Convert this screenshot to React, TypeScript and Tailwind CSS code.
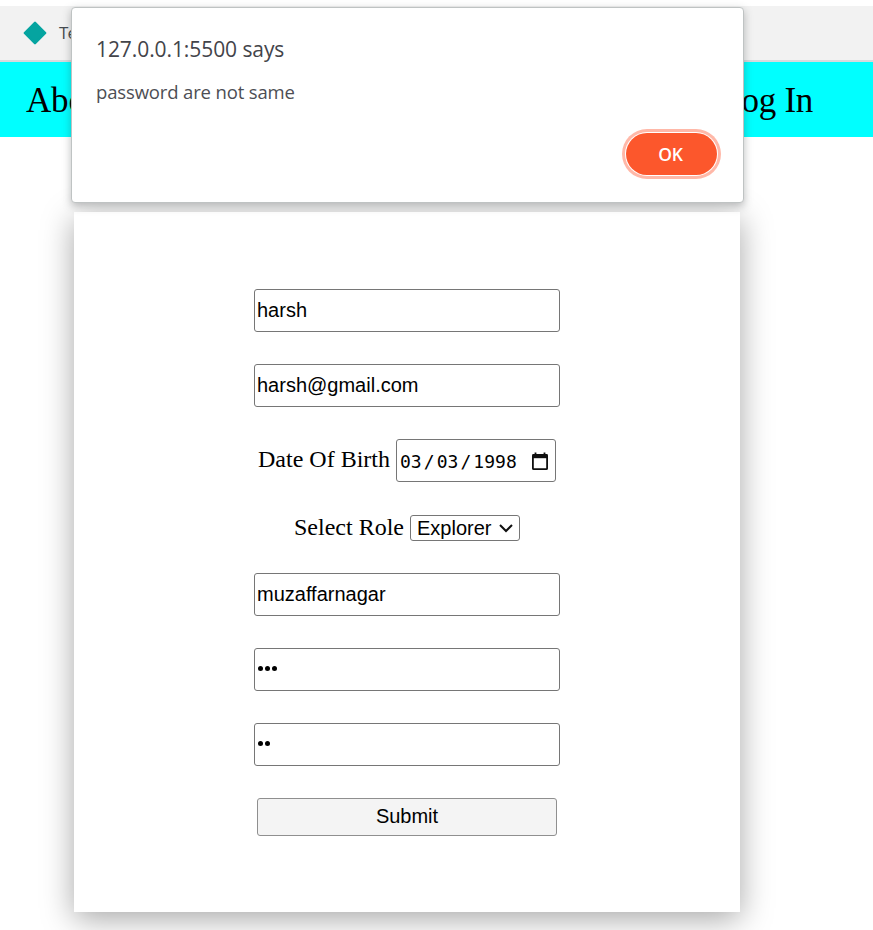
import type { ReactNode } from "react";

const sans = "font-['Liberation_Sans',Arial,sans-serif]";
const serif = "font-['Liberation_Serif','Times_New_Roman',serif]";
const ui = "font-['Open_Sans','Noto_Sans',sans-serif]";

function Field({ children }: { children: ReactNode }) {
  return (
    <div
      className={`${sans} flex h-[43px] w-[306px] items-center rounded-[3px] border border-[#767676] bg-white pl-[2px] pb-px text-[20px] leading-[23px] text-black`}
    >
      {children}
    </div>
  );
}

function Dots({ count }: { count: number }) {
  return (
    <div className="flex gap-[2px] pl-px pb-[2px]">
      {Array.from({ length: count }, (_, i) => (
        <span key={i} className="h-[5px] w-[5px] rounded-full bg-black" />
      ))}
    </div>
  );
}

function BookmarkBar() {
  return (
    <div className="mt-[6px] flex h-[56px] items-center border-b-2 border-[#d6d9dc] bg-[#f2f2f2] pl-[23px]">
      <svg width="24" height="24" viewBox="0 0 24 24">
        <path d="M12 1.8 22.2 12 12 22.2 1.8 12Z" fill="#05a4a0" stroke="#05a4a0" strokeWidth="2.4" strokeLinejoin="round" />
      </svg>
      <span className={`${ui} ml-[12px] text-[17px] leading-6 tracking-[-0.9px] text-[#454b50]`}>Te</span>
    </div>
  );
}

function NavBar() {
  return (
    <nav className={`${serif} flex h-[75px] items-center justify-between bg-[#00ffff] pl-[26px] pr-[60px] pt-[2px] text-[35px] leading-[42px] text-black`}>
      <span className="tracking-[-0.2px]">Abo</span>
      <span className="tracking-[-0.3px]">Log In</span>
    </nav>
  );
}

function SignupForm() {
  return (
    <main className="ml-[74px] mt-[75px] flex h-[700px] w-[666px] flex-col items-center bg-white pt-[77px] shadow-[0_7px_30px_rgba(0,0,0,0.35)]">
      <Field>harsh</Field>
      <div className="h-8" />
      <Field>harsh@gmail.com</Field>
      <div className={`${serif} mt-8 flex h-[43px] items-center text-[24px] leading-7 text-black`}>
        <span className="pb-[3px]">Date Of Birth</span>
        <div className="ml-[6px] flex h-[43px] w-[160px] items-center justify-between rounded-[3px] border border-[#767676] pl-[3px] pr-[6px] pt-px font-['DejaVu_Sans_Mono',monospace] text-[18px] tracking-[0.05px]">
          <span className="whitespace-nowrap pt-px">
            03<span className="px-[2px]">/</span>03<span className="px-[2px]">/</span>1998
          </span>
          <svg width="18" height="19" viewBox="0 0 18 19" className="shrink-0">
            <path d="M4.5 0.5v4M13.5 0.5v4" stroke="#101010" strokeWidth="1.8" />
            <rect x="1.9" y="3" width="14.2" height="14.2" rx="0.8" fill="none" stroke="#101010" strokeWidth="1.8" />
            <path d="M1.5 2.2h15v4h-15z" fill="#101010" />
          </svg>
        </div>
      </div>
      <div className={`${serif} mt-[33px] flex h-[26px] items-center text-[24px] leading-[26px] text-black`}>
        <span className="pb-[2px]">Select Role</span>
        <div className={`${sans} ml-[6px] flex h-[26px] w-[110px] items-center rounded-[3px] border border-[#767676] pl-[6px] text-[20px] leading-6`}>
          <span>Explorer</span>
          <svg width="16" height="10" viewBox="0 0 16 10" className="ml-[7px]">
            <path d="M2 2l6 6 6-6" fill="none" stroke="#101010" strokeWidth="2" />
          </svg>
        </div>
      </div>
      <div className="h-8" />
      <Field>muzaffarnagar</Field>
      <div className="h-8" />
      <Field><Dots count={3} /></Field>
      <div className="h-8" />
      <Field><Dots count={2} /></Field>
      <button className={`${sans} mt-8 flex h-[38px] w-[300px] items-center justify-center rounded-[3px] border border-[#8f8f8f] bg-[#f4f4f4] pb-[2px] text-[20px] leading-6 text-black`}>
        Submit
      </button>
    </main>
  );
}

function AlertDialog() {
  return (
    <div
      role="alertdialog"
      className={`${ui} absolute left-[71px] top-[7px] flex h-[196px] w-[673px] flex-col rounded-[4px] border border-[#bfc3c3] bg-white px-[24px] shadow-[0_3px_8px_rgba(60,64,67,0.35)]`}
    >
      <h1 className="mt-[25px] text-[21px] leading-8 tracking-[-0.08px] text-[#43444a]"><span>127.0.0.1:5500 says</span></h1>
      <p className="mt-[13px] text-[18.5px] leading-7 tracking-[-0.15px] text-[#4d4e54]"><span>password are not same</span></p>
      <button className="mr-[2px] mt-[27px] flex h-[42px] w-[91px] items-center justify-center self-end rounded-full bg-[#fc572c] pr-[2px] text-[17.5px] font-semibold tracking-[-0.3px] text-white shadow-[0_0_0_1px_#fff,0_0_0_4px_#ffb8a8]">
        OK
      </button>
    </div>
  );
}

export default function App() {
  return (
    <div className="relative flow-root h-[930px] w-[873px] overflow-hidden bg-white">
      <BookmarkBar />
      <NavBar />
      <SignupForm />
      <AlertDialog />
    </div>
  );
}
